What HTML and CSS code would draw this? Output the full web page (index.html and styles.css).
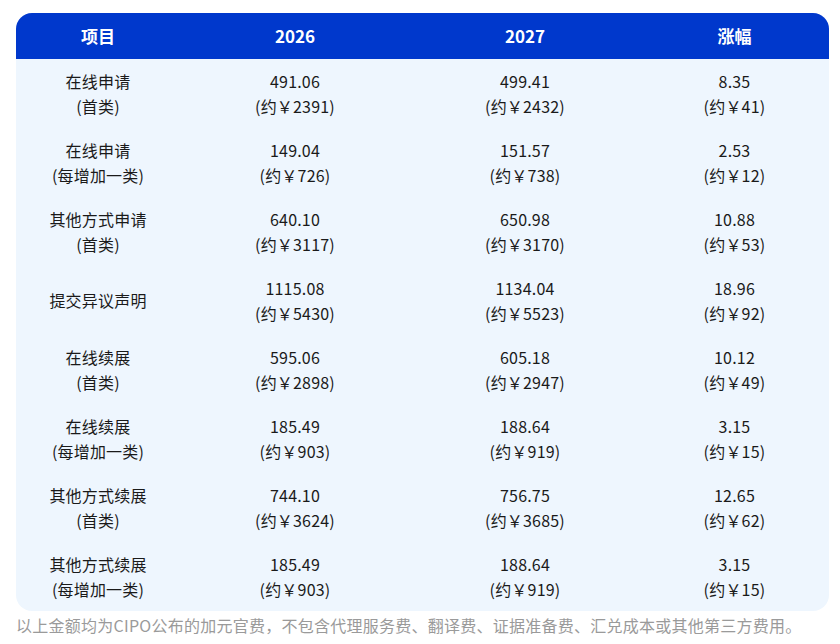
FILE: index.html
```html
<!DOCTYPE html>
<html lang="zh-CN">
<head>
<meta charset="utf-8">
<title>CIPO 官费</title>
<link rel="stylesheet" href="styles.css">
</head>
<body>
<div class="page">
  <div class="card">
    <table class="fees">
      <colgroup>
        <col class="c1"><col class="c2"><col class="c3"><col class="c4">
      </colgroup>
      <thead>
        <tr><th>项目</th><th>2026</th><th>2027</th><th>涨幅</th></tr>
      </thead>
      <tbody>
        <tr><td>在线申请<br>(首类)</td><td>491.06<br>(约￥2391)</td><td>499.41<br>(约￥2432)</td><td>8.35<br>(约￥41)</td></tr>
        <tr><td>在线申请<br>(每增加一类)</td><td>149.04<br>(约￥726)</td><td>151.57<br>(约￥738)</td><td>2.53<br>(约￥12)</td></tr>
        <tr><td>其他方式申请<br>(首类)</td><td>640.10<br>(约￥3117)</td><td>650.98<br>(约￥3170)</td><td>10.88<br>(约￥53)</td></tr>
        <tr><td>提交异议声明</td><td>1115.08<br>(约￥5430)</td><td>1134.04<br>(约￥5523)</td><td>18.96<br>(约￥92)</td></tr>
        <tr><td>在线续展<br>(首类)</td><td>595.06<br>(约￥2898)</td><td>605.18<br>(约￥2947)</td><td>10.12<br>(约￥49)</td></tr>
        <tr><td>在线续展<br>(每增加一类)</td><td>185.49<br>(约￥903)</td><td>188.64<br>(约￥919)</td><td>3.15<br>(约￥15)</td></tr>
        <tr><td>其他方式续展<br>(首类)</td><td>744.10<br>(约￥3624)</td><td>756.75<br>(约￥3685)</td><td>12.65<br>(约￥62)</td></tr>
        <tr><td>其他方式续展<br>(每增加一类)</td><td>185.49<br>(约￥903)</td><td>188.64<br>(约￥919)</td><td>3.15<br>(约￥15)</td></tr>
      </tbody>
    </table>
  </div>
  <p class="note">以上金额均为CIPO公布的加元官费，不包含代理服务费、翻译费、证据准备费、汇兑成本或其他第三方费用。</p>
</div>
</body>
</html>
```

FILE: styles.css
```css
html, body {
  margin: 0;
  padding: 0;
  background: #ffffff;
}
body {
  font-family: "Noto Sans CJK SC", "Noto Sans", sans-serif;
  color: #1a1a1a;
}
.page {
  padding: 13px 11px 0 16px;
}
.card {
  width: 813px;
  border-radius: 16px;
  overflow: hidden;
  background: #eef6fe;
}
.fees {
  width: 100%;
  border-collapse: collapse;
  table-layout: fixed;
}
.c1 { width: 164px; }
.c2 { width: 230px; }
.c3 { width: 230px; }
.c4 { width: 189px; }
.fees th {
  background: #0038cc;
  color: #ffffff;
  font-size: 17px;
  font-weight: 700;
  height: 46px;
  padding: 0;
  text-align: center;
  vertical-align: middle;
  line-height: 20px;
}
.fees td {
  height: 69px;
  padding: 0;
  text-align: center;
  vertical-align: middle;
  font-size: 16px;
  line-height: 25px;
  letter-spacing: 0.2px;
}
.note {
  margin: 3px 0 0 0;
  font-size: 16px;
  line-height: 22px;
  letter-spacing: 0.25px;
  color: #9a9a9a;
  white-space: nowrap;
}
```
